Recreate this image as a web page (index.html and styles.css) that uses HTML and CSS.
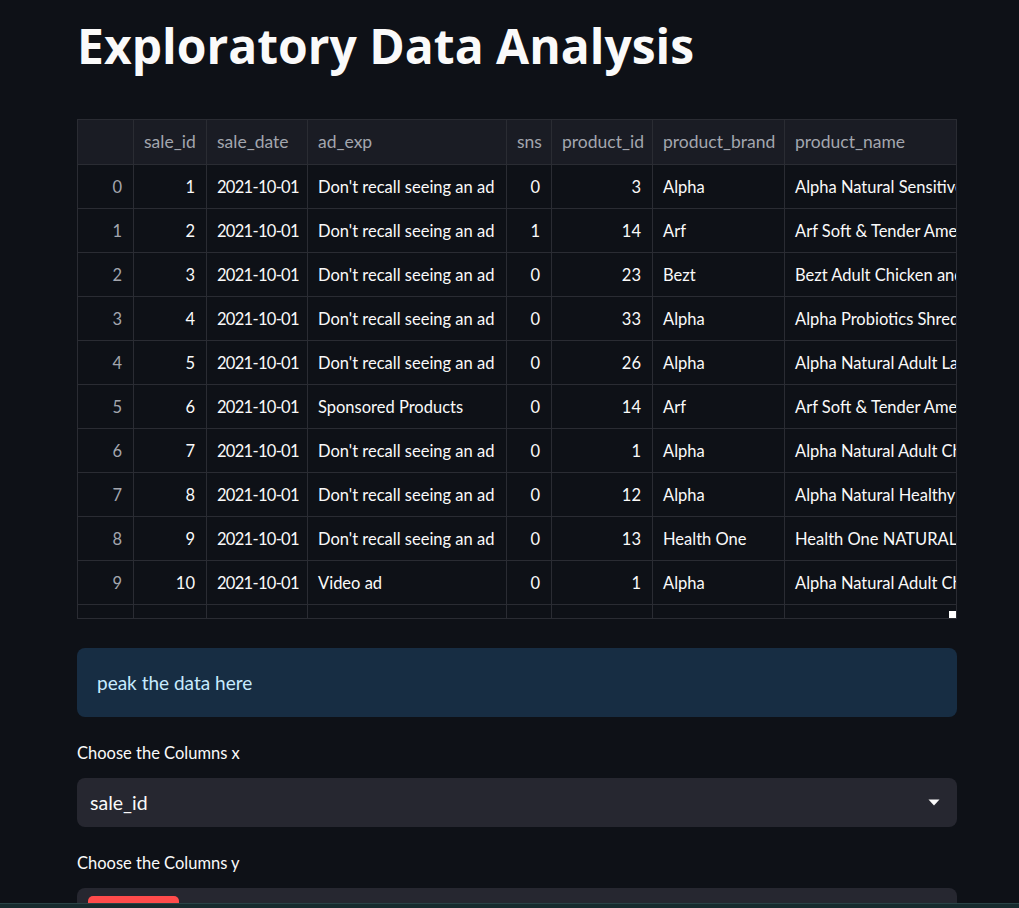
FILE: index.html
```html
<!DOCTYPE html>
<html lang="en">
<head>
<meta charset="utf-8">
<title>Exploratory Data Analysis</title>
<link rel="stylesheet" href="styles.css">
</head>
<body>
<main class="main">
  <h1 class="title">Exploratory Data Analysis</h1>

  <div class="grid">
    <div class="row head">
      <div class="c idx"></div>
      <div class="c">sale_id</div>
      <div class="c">sale_date</div>
      <div class="c">ad_exp</div>
      <div class="c">sns</div>
      <div class="c">product_id</div>
      <div class="c">product_brand</div>
      <div class="c">product_name</div>
    </div>
    <div class="row"><div class="c idx num">0</div><div class="c num">1</div><div class="c d">2021-10-01</div><div class="c">Don't recall seeing an ad</div><div class="c num">0</div><div class="c num">3</div><div class="c">Alpha</div><div class="c">Alpha Natural Sensitive Skin &amp; Stomach</div></div>
    <div class="row"><div class="c idx num">1</div><div class="c num">2</div><div class="c d">2021-10-01</div><div class="c">Don't recall seeing an ad</div><div class="c num">1</div><div class="c num">14</div><div class="c">Arf</div><div class="c">Arf Soft &amp; Tender American Jerky</div></div>
    <div class="row"><div class="c idx num">2</div><div class="c num">3</div><div class="c d">2021-10-01</div><div class="c">Don't recall seeing an ad</div><div class="c num">0</div><div class="c num">23</div><div class="c">Bezt</div><div class="c">Bezt Adult Chicken and Rice</div></div>
    <div class="row"><div class="c idx num">3</div><div class="c num">4</div><div class="c d">2021-10-01</div><div class="c">Don't recall seeing an ad</div><div class="c num">0</div><div class="c num">33</div><div class="c">Alpha</div><div class="c">Alpha Probiotics Shredded Blend</div></div>
    <div class="row"><div class="c idx num">4</div><div class="c num">5</div><div class="c d">2021-10-01</div><div class="c">Don't recall seeing an ad</div><div class="c num">0</div><div class="c num">26</div><div class="c">Alpha</div><div class="c">Alpha Natural Adult Large Breed</div></div>
    <div class="row"><div class="c idx num">5</div><div class="c num">6</div><div class="c d">2021-10-01</div><div class="c">Sponsored Products</div><div class="c num">0</div><div class="c num">14</div><div class="c">Arf</div><div class="c">Arf Soft &amp; Tender American Jerky</div></div>
    <div class="row"><div class="c idx num">6</div><div class="c num">7</div><div class="c d">2021-10-01</div><div class="c">Don't recall seeing an ad</div><div class="c num">0</div><div class="c num">1</div><div class="c">Alpha</div><div class="c">Alpha Natural Adult Chicken</div></div>
    <div class="row"><div class="c idx num">7</div><div class="c num">8</div><div class="c d">2021-10-01</div><div class="c">Don't recall seeing an ad</div><div class="c num">0</div><div class="c num">12</div><div class="c">Alpha</div><div class="c">Alpha Natural Healthy Weight</div></div>
    <div class="row"><div class="c idx num">8</div><div class="c num">9</div><div class="c d">2021-10-01</div><div class="c">Don't recall seeing an ad</div><div class="c num">0</div><div class="c num">13</div><div class="c">Health One</div><div class="c">Health One NATURAL Chicken</div></div>
    <div class="row"><div class="c idx num">9</div><div class="c num">10</div><div class="c d">2021-10-01</div><div class="c">Video ad</div><div class="c num">0</div><div class="c num">1</div><div class="c">Alpha</div><div class="c">Alpha Natural Adult Chicken</div></div>
    <div class="row"><div class="c idx num">10</div><div class="c num">11</div><div class="c d">2021-10-01</div><div class="c">Sponsored Products</div><div class="c num">0</div><div class="c num">14</div><div class="c">Arf</div><div class="c">Arf Soft &amp; Tender American Jerky</div></div>
    <span class="corner"></span>
  </div>

  <div class="info">peak the data here</div>

  <div class="label">Choose the Columns x</div>
  <div class="select">
    <span class="value">sale_id</span>
    <svg class="arrow" width="12" height="7" viewBox="0 0 12 7"><path d="M0.5 0.5 H11.5 L6 6.5 Z" fill="#fafafa"/></svg>
  </div>

  <div class="label">Choose the Columns y</div>
  <div class="select multi">
    <span class="tag">ad_exp ✕</span>
  </div>
</main>
<div class="statusbar"></div>
</body>
</html>
```
FILE: styles.css
```css
* { box-sizing: border-box; }

html, body {
  margin: 0;
  padding: 0;
  background: #0e1117;
  color: #fafafa;
  font-family: Lato, "Liberation Sans", sans-serif;
  overflow: hidden;
}

.main {
  width: 880px;
  margin-left: 77px;
  padding-top: 16px;
}

.title {
  margin: 0 0 43px 0;
  font-family: "Open Sans", Lato, sans-serif;
  font-size: 48px;
  line-height: 60px;
  font-weight: 700;
  letter-spacing: 0;
}

.grid {
  position: relative;
  width: 880px;
  height: 500px;
  border: 1px solid #2a2c33;
  overflow: hidden;
  font-size: 16.5px;
}

.row {
  display: grid;
  grid-template-columns: 56px 73px 101px 199px 45px 101px 132px 320px;
  height: 44px;
  background: #0e1117;
}

.row.head {
  height: 45px;
  background: #1a1c24;
  color: #a3a6ae;
  font-size: 17.5px;
}

.row.head .c { padding-bottom: 2px; }

.c {
  display: flex;
  align-items: center;
  padding: 0 10px;
  border-right: 1px solid #2a2c33;
  border-bottom: 1px solid #2a2c33;
  white-space: nowrap;
  overflow: hidden;
}

.c.num { justify-content: flex-end; padding-right: 11px; }
.c.idx { color: #a3a6ae; }
.c.d { letter-spacing: -0.7px; }

.corner {
  position: absolute;
  right: 0;
  bottom: 0;
  width: 7px;
  height: 7px;
  background: #ffffff;
}

.info {
  margin-top: 29px;
  height: 69px;
  display: flex;
  align-items: center;
  padding: 0 20px;
  border-radius: 8px;
  background: #172d43;
  color: #c7ebff;
  font-size: 19px;
}

.label {
  margin-top: 24px;
  font-size: 16.5px;
  line-height: 24px;
  color: #fafafa;
}

.select {
  margin-top: 13px;
  height: 49px;
  border-radius: 8px;
  background: #262730;
  display: flex;
  align-items: center;
  justify-content: space-between;
  padding: 0 17px 0 13px;
  font-size: 19.5px;
}

.select.multi {
  align-items: flex-start;
  padding: 8px 11px;
  justify-content: flex-start;
}

.tag {
  display: inline-block;
  width: 91px;
  height: 28px;
  line-height: 28px;
  border-radius: 5px;
  background: #ff4b4b;
  color: #fff;
  font-size: 16px;
  padding: 0 10px;
}

.statusbar {
  position: fixed;
  left: 0;
  right: 0;
  bottom: 0;
  height: 5px;
  background: #172b2e;
  border-top: 1px solid #2a4446;
}
```
